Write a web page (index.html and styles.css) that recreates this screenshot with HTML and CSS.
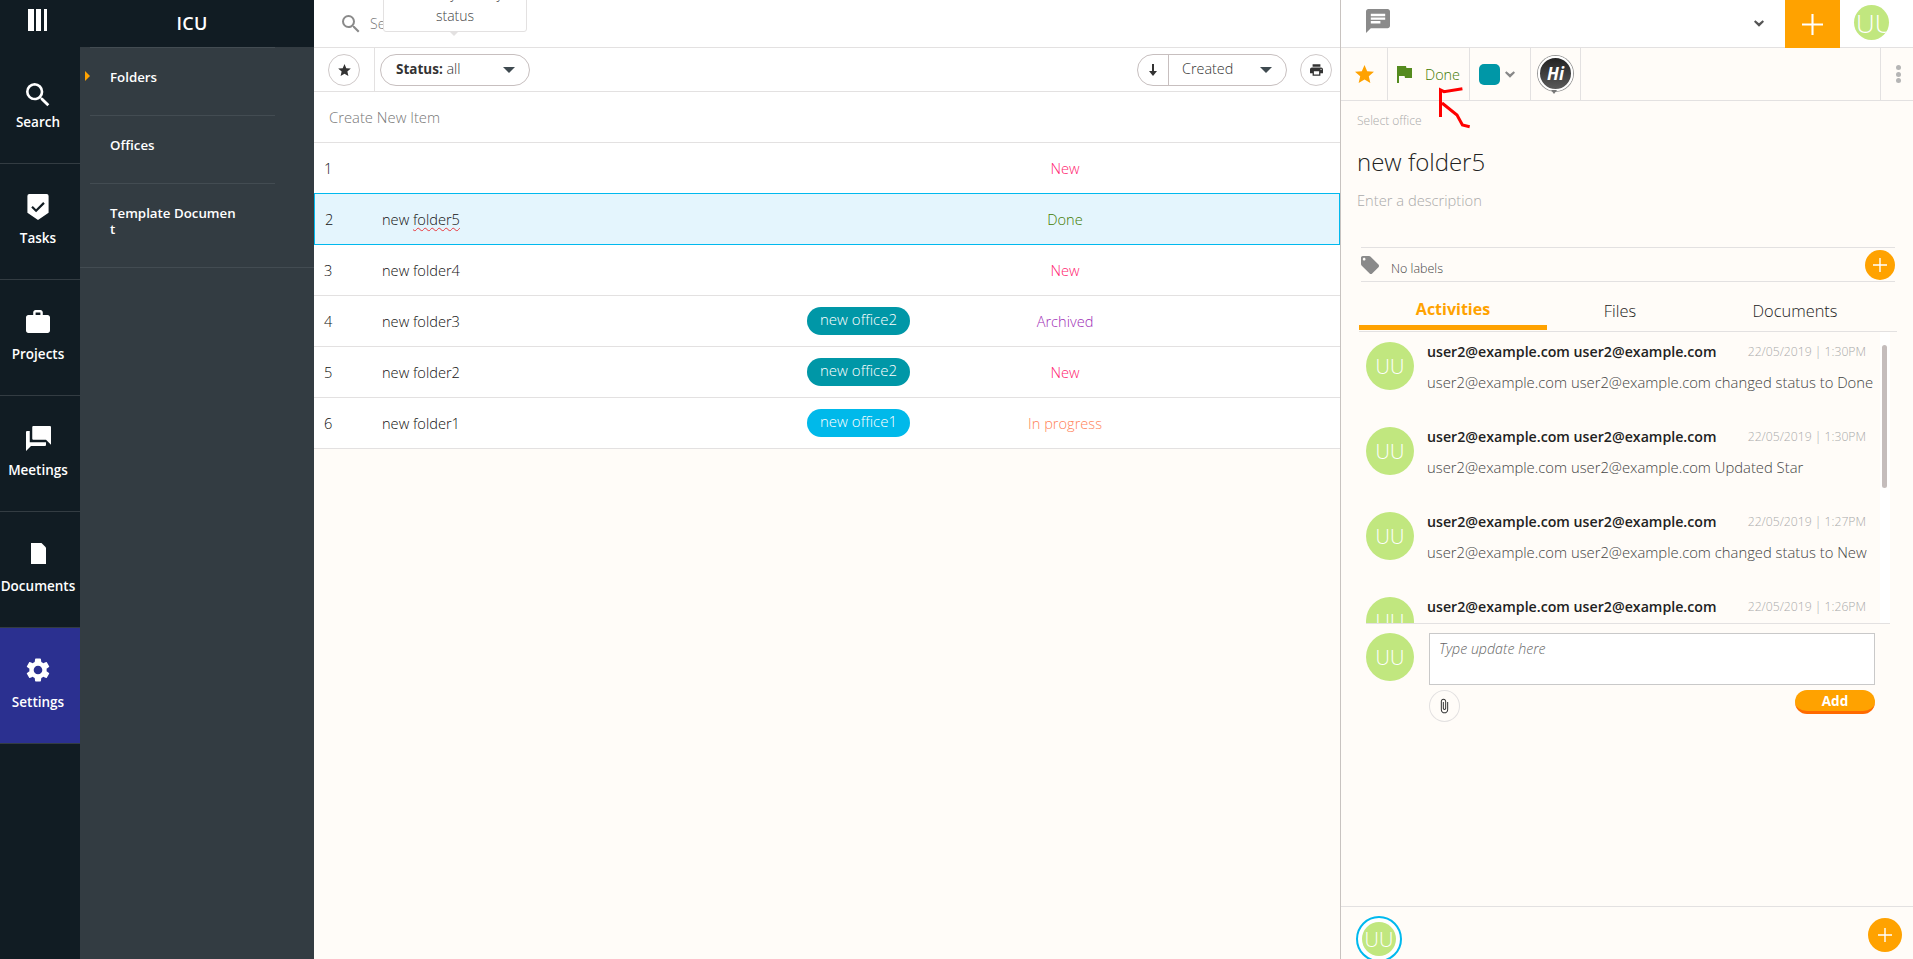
FILE: index.html
```html
<!DOCTYPE html>
<html lang="en">
<head>
<meta charset="utf-8">
<title>ICU</title>
<link rel="stylesheet" href="styles.css">
</head>
<body>
<svg class="defs" width="0" height="0" aria-hidden="true">
  <symbol id="i-search" viewBox="3 3 18 18"><path d="M15.5 14h-.79l-.28-.27A6.471 6.471 0 0 0 16 9.5 6.5 6.5 0 1 0 9.5 16c1.61 0 3.09-.59 4.23-1.57l.27.28v.79l5 4.99L20.49 19l-4.99-5zm-6 0C7.01 14 5 11.99 5 9.5S7.01 5 9.5 5 14 7.01 14 9.5 11.99 14 9.5 14z"/></symbol>
  <symbol id="i-tasks" viewBox="0 0 22 27"><path fill-rule="evenodd" d="M2 0h18a2 2 0 0 1 2 2v17.5L11 27 0 19.500V2a2 2 0 0 1 2-2zm3.600 12.400L4 14l5 5 9-9-1.600-1.600L9 15.800z"/></symbol>
  <symbol id="i-work" viewBox="2 2 20 19"><path d="M20 6h-4V4c0-1.110-.89-2-2-2h-4c-1.110 0-2 .89-2 2v2H4c-1.110 0-1.990.89-1.990 2L2 19c0 1.110.89 2 2 2h16c1.110 0 2-.89 2-2V8c0-1.110-.89-2-2-2zm-6 0h-4V4h4v2z"/></symbol>
  <symbol id="i-forum" viewBox="2 2 20 20"><path transform="matrix(-1 0 0 1 24 0)" d="M21 6h-2v9H6v2c0 .55.45 1 1 1h11l4 4V7c0-.55-.45-1-1-1zm-4 6V3c0-.55-.45-1-1-1H3c-.55 0-1 .45-1 1v14l4-4h10c.55 0 1-.45 1-1z"/></symbol>
  <symbol id="i-doc" viewBox="0 0 15 21"><path d="M0 0h10.500L15 4.500V21H0z"/></symbol>
  <symbol id="i-gear" viewBox="2.500 2 19 20"><path d="M19.140 12.940c.04-.3.06-.61.06-.94 0-.32-.02-.64-.07-.94l2.030-1.580a.49.49 0 0 0 .12-.61l-1.920-3.320a.488.488 0 0 0-.59-.22l-2.390.96c-.5-.38-1.030-.7-1.620-.94l-.36-2.540a.484.484 0 0 0-.48-.41h-3.840c-.24 0-.43.17-.47.41l-.36 2.540c-.59.24-1.130.57-1.620.94l-2.390-.96c-.22-.08-.47 0-.59.22L2.740 8.870c-.12.21-.08.47.12.61l2.030 1.580c-.05.3-.09.63-.09.94s.02.64.07.94l-2.030 1.580a.49.49 0 0 0-.12.61l1.920 3.320c.12.22.37.29.59.22l2.390-.96c.5.38 1.030.7 1.620.94l.36 2.540c.05.24.24.41.48.41h3.840c.24 0 .44-.17.47-.41l.36-2.540c.59-.24 1.130-.56 1.620-.94l2.390.96c.22.08.47 0 .59-.22l1.920-3.320c.12-.22.07-.47-.12-.61l-2.010-1.580zM12 15.600c-1.980 0-3.600-1.620-3.600-3.600s1.620-3.600 3.600-3.600 3.600 1.620 3.600 3.600-1.620 3.600-3.600 3.600z"/></symbol>
  <symbol id="i-star" viewBox="2 2 20 19"><path d="M12 17.270 18.180 21l-1.640-7.030L22 9.240l-7.190-.61L12 2 9.190 8.630 2 9.240l5.460 4.730L5.820 21z"/></symbol>
  <symbol id="i-print" viewBox="2 3 20 18"><path d="M19 8H5c-1.660 0-3 1.340-3 3v6h4v4h12v-4h4v-6c0-1.660-1.340-3-3-3zm-3 11H8v-5h8v5zm3-7c-.55 0-1-.45-1-1s.45-1 1-1 1 .45 1 1-.45 1-1 1zm-1-9H6v4h12V3z"/></symbol>
  <symbol id="i-down" viewBox="0 0 8 12"><path d="M3 0h2v7h3l-4 5-4-5h3z"/></symbol>
  <symbol id="i-chat" viewBox="2 2 20 20" preserveAspectRatio="none"><path d="M20 2H4c-1.100 0-1.990.9-1.990 2L2 22l4-4h14c1.100 0 2-.9 2-2V4c0-1.100-.9-2-2-2zM6 9h12v2H6V9zm8 5H6v-2h8v2zm4-6H6V6h12v2z"/></symbol>
  <symbol id="i-flag" viewBox="5 4 15 17"><path d="M14.400 6L14 4H5v17h2v-7h5.600l.4 2h7V6z"/></symbol>
  <symbol id="i-label" viewBox="2 2 20 20"><path d="M21.410 11.580l-9-9C12.050 2.220 11.550 2 11 2H4c-1.100 0-2 .9-2 2v7c0 .55.22 1.050.59 1.420l9 9c.36.36.86.58 1.410.58.55 0 1.050-.22 1.410-.59l7-7c.37-.36.59-.86.59-1.410 0-.55-.23-1.060-.59-1.420zM5.500 7C4.670 7 4 6.330 4 5.500S4.670 4 5.500 4 7 4.670 7 5.500 6.330 7 5.500 7z"/></symbol>
  <symbol id="i-clip" viewBox="6 0 13 24"><path d="M16.500 6v11.500c0 2.210-1.790 4-4 4s-4-1.790-4-4V5c0-1.380 1.120-2.500 2.500-2.500s2.500 1.120 2.500 2.500v10.500c0 .55-.45 1-1 1s-1-.45-1-1V6H10v9.500c0 1.380 1.120 2.500 2.500 2.500s2.500-1.120 2.500-2.500V5c0-2.210-1.790-4-4-4S7 2.790 7 5v12.500c0 3.040 2.460 5.500 5.500 5.500s5.500-2.460 5.500-5.500V6h-1.500z"/></symbol>
  <symbol id="i-chev" viewBox="0 0 12 8"><path d="M1.600 0 6 3.800 10.400 0 12 2 6 8 0 2z"/></symbol>
  <symbol id="i-plus" viewBox="0 0 20 20"><path d="M9 0h2v9h9v2h-9v9H9v-9H0V9h9z"/></symbol>
</svg>

<div class="app">
  <aside class="sidebar">
    <header class="brand">
      <div class="brand-menu">
        <span class="bar bar-a"></span><span class="bar bar-b"></span><span class="bar bar-c"></span>
      </div>
      <div class="brand-title">ICU</div>
    </header>
    <div class="nav-wrap">
      <nav class="rail">
        <a class="rail-item"><svg class="rail-icon ri-search"><use href="#i-search"/></svg><span>Search</span></a>
        <a class="rail-item"><svg class="rail-icon ri-tasks"><use href="#i-tasks"/></svg><span>Tasks</span></a>
        <a class="rail-item"><svg class="rail-icon ri-work"><use href="#i-work"/></svg><span>Projects</span></a>
        <a class="rail-item"><svg class="rail-icon ri-forum"><use href="#i-forum"/></svg><span>Meetings</span></a>
        <a class="rail-item"><svg class="rail-icon ri-doc"><use href="#i-doc"/></svg><span>Documents</span></a>
        <a class="rail-item rail-active"><svg class="rail-icon ri-gear"><use href="#i-gear"/></svg><span>Settings</span></a>
      </nav>
      <nav class="subnav">
        <a class="sub-item sub-active"><span class="sub-text">Folders</span></a>
        <a class="sub-item sub-mid"><span class="sub-text">Offices</span></a>
        <a class="sub-item sub-last"><span class="sub-text">Template Document</span></a>
      </nav>
    </div>
  </aside>

  <main class="main">
    <div class="searchbar">
      <svg class="search-icon"><use href="#i-search"/></svg>
      <span class="search-text">Search</span>
      <div class="tooltip">Filter by activity status</div>
    </div>
    <div class="filterbar">
      <div class="star-cell"><button class="round-btn"><svg class="ic-star"><use href="#i-star"/></svg></button></div>
      <button class="pill status-pill"><span class="pill-text"><b>Status:</b> all</span><i class="caret"></i></button>
      <div class="spacer"></div>
      <div class="pill sort-pill">
        <span class="sort-dir"><svg class="ic-down"><use href="#i-down"/></svg></span>
        <span class="sort-name pill-text">Created</span><i class="caret"></i>
      </div>
      <button class="round-btn print-btn"><svg class="ic-print"><use href="#i-print"/></svg></button>
    </div>
    <div class="create-row">Create New Item</div>
    <div class="row"><span class="c-num">1</span><span class="c-name"></span><span class="c-office"></span><span class="c-status s-new">New</span></div>
    <div class="row row-selected"><span class="c-num">2</span><span class="c-name">new <span class="spell">folder5</span></span><span class="c-office"></span><span class="c-status s-done">Done</span></div>
    <div class="row"><span class="c-num">3</span><span class="c-name">new folder4</span><span class="c-office"></span><span class="c-status s-new">New</span></div>
    <div class="row"><span class="c-num">4</span><span class="c-name">new folder3</span><span class="c-office"><span class="office o-teal">new office2</span></span><span class="c-status s-arch">Archived</span></div>
    <div class="row"><span class="c-num">5</span><span class="c-name">new folder2</span><span class="c-office"><span class="office o-teal">new office2</span></span><span class="c-status s-new">New</span></div>
    <div class="row"><span class="c-num">6</span><span class="c-name">new folder1</span><span class="c-office"><span class="office o-blue">new office1</span></span><span class="c-status s-prog">In progress</span></div>
  </main>

  <section class="detail">
    <div class="topbar">
      <svg class="ic-chat"><use href="#i-chat"/></svg>
      <div class="spacer"></div>
      <svg class="ic-chev-top"><use href="#i-chev"/></svg>
      <button class="add-top"><svg class="ic-plus-top"><use href="#i-plus"/></svg></button>
      <div class="avatar avatar-top"><span>UU</span></div>
    </div>
    <div class="toolbar">
      <div class="tool tool-star"><svg class="ic-star-o"><use href="#i-star"/></svg></div>
      <div class="tool tool-status"><svg class="ic-flag"><use href="#i-flag"/></svg><span>Done</span></div>
      <div class="tool tool-color"><span class="swatch"></span><svg class="ic-chev"><use href="#i-chev"/></svg></div>
      <div class="tool tool-hi"><div class="hi"><span>Hi</span></div></div>
      <div class="spacer"></div>
      <div class="tool tool-more"><i></i><i></i><i></i></div>
    </div>
    <div class="detail-head">
      <div class="select-office">Select office</div>
      <h1 class="title">new folder5</h1>
      <div class="desc">Enter a description</div>
      <div class="labels">
        <svg class="ic-label"><use href="#i-label"/></svg>
        <span class="labels-text">No labels</span>
        <button class="plus-btn"><svg class="ic-plus"><use href="#i-plus"/></svg></button>
      </div>
    </div>
    <div class="tabs">
      <div class="tab tab-active">Activities</div>
      <div class="tab tab-files">Files</div>
      <div class="tab tab-docs">Documents</div>
    </div>
    <div class="activity-wrap">
      <div class="activity-list">
        <div class="activity">
          <div class="avatar avatar-m"><span>UU</span></div>
          <div class="activity-body">
            <div class="activity-top"><b>user2@example.com user2@example.com</b><time>22/05/2019 | 1:30PM</time></div>
            <p>user2@example.com user2@example.com changed status to Done</p>
          </div>
        </div>
        <div class="activity">
          <div class="avatar avatar-m"><span>UU</span></div>
          <div class="activity-body">
            <div class="activity-top"><b>user2@example.com user2@example.com</b><time>22/05/2019 | 1:30PM</time></div>
            <p>user2@example.com user2@example.com Updated Star</p>
          </div>
        </div>
        <div class="activity">
          <div class="avatar avatar-m"><span>UU</span></div>
          <div class="activity-body">
            <div class="activity-top"><b>user2@example.com user2@example.com</b><time>22/05/2019 | 1:27PM</time></div>
            <p>user2@example.com user2@example.com changed status to New</p>
          </div>
        </div>
        <div class="activity">
          <div class="avatar avatar-m"><span>UU</span></div>
          <div class="activity-body">
            <div class="activity-top"><b>user2@example.com user2@example.com</b><time>22/05/2019 | 1:26PM</time></div>
          </div>
        </div>
      </div>
      <div class="scroll-track"><div class="scroll-thumb"></div></div>
    </div>
    <div class="composer">
      <div class="avatar avatar-m"><span>UU</span></div>
      <div class="composer-main">
        <div class="update-box">Type update here</div>
        <div class="composer-actions">
          <button class="clip-btn"><svg class="ic-clip"><use href="#i-clip"/></svg></button>
          <button class="add-btn">Add</button>
        </div>
      </div>
    </div>
    <div class="spacer"></div>
    <footer class="detail-foot">
      <div class="ring"><div class="avatar avatar-s"><span>UU</span></div></div>
      <button class="foot-plus"><svg class="ic-plus-foot"><use href="#i-plus"/></svg></button>
    </footer>
  </section>
</div>

<svg class="scribble" viewBox="0 0 33 43" width="33" height="43" aria-hidden="true">
  <path d="M24.400 2.700 6 5.700 2.500 4V31M4 17l15 12 5.400 10 7.300 1.700"/>
</svg>
</body>
</html>
```
FILE: styles.css
```css
* { box-sizing: border-box; }
html, body { margin: 0; height: 100%; overflow: hidden; }
body { font-family: "Open Sans", "Liberation Sans", sans-serif; color: #222; background: #fffcf8; font-size: 14px; }
button { font: inherit; padding: 0; cursor: pointer; }
svg { display: block; fill: currentColor; }
.defs { position: absolute; }
.spacer { flex: 1 1 auto; }
.app { display: flex; height: 959px; }

/* sidebar */
.sidebar { width: 314px; flex: none; display: flex; flex-direction: column; background: #333c42; color: #fff; }
.brand { height: 47px; flex: none; display: flex; background: #111c23; }
.brand-menu { width: 80px; display: flex; gap: 2px; padding: 9px 0 0 28px; }
.bar { display: block; height: 22px; background: #fff; }
.bar-a { width: 6px; }
.bar-b { width: 5px; }
.bar-c { width: 3px; margin-left: 1px; }
.brand-title { flex: 1; text-align: center; font-size: 18px; font-weight: 600; line-height: 46px; padding-right: 10px; letter-spacing: .3px; }
.nav-wrap { flex: 1; display: flex; }
.rail { width: 80px; flex: none; background: #111c23; padding-top: 1px; }
.rail-item { display: flex; flex-direction: column; align-items: center; height: 116px; padding-right: 4px; border-bottom: 1px solid #333c42; font-size: 13.500px; font-weight: 600; line-height: 18px; color: #fff; white-space: nowrap; }
.rail-active { background: #2b3090; }
.rail-icon { flex: none; color: #fff; }
.ri-search { width: 24px; height: 24px; margin: 35px 0 6px; }
.ri-tasks { width: 22px; height: 26px; margin: 30px 0 9px; }
.ri-work { width: 24px; height: 23px; margin: 30px 0 12px; }
.ri-forum { width: 25px; height: 25px; margin: 30px 0 10px; }
.ri-doc { width: 15px; height: 21px; margin: 31px 0 13px; }
.ri-gear { width: 24px; height: 24px; margin: 30px 0 11px; }

.subnav { flex: 1; }
.sub-item { display: block; position: relative; height: 68px; margin: 0 39px 0 10px; padding: 21px 0 0 20px; border-top: 1px solid #434c52; font-size: 13.300px; font-weight: 600; line-height: 16px; color: #fff; }
.sub-text { display: block; word-break: break-all; }
.sub-mid { height: 69px; border-bottom: 1px solid #434c52; }
.sub-last { height: 84px; margin: 0; padding: 21px 76px 0 30px; border-top: 0; border-bottom: 1px solid #434c52; }
.sub-active::before { content: ""; position: absolute; left: -5px; top: 23px; border-left: 5px solid #ffa200; border-top: 5px solid transparent; border-bottom: 5px solid transparent; }

/* main list */
.main { width: 1026px; flex: none; background: #fffcf8; }
.searchbar { height: 48px; position: relative; display: flex; align-items: center; padding: 0 0 0 28px; background: #fff; border-bottom: 1px solid #e3e1e1; }
.search-icon { width: 18px; height: 18px; color: #8a8a8a; }
.search-text { margin-left: 10px; color: #777; font-size: 14px; font-weight: 300; }
.tooltip { position: absolute; left: 69px; top: -21px; width: 144px; height: 53px; padding: 3px 14px; background: #fff; border: 1px solid #e3e1e1; border-radius: 3px; text-align: center; font-size: 14px; font-weight: 300; line-height: 22px; color: #444; }
.tooltip::after { content: ""; position: absolute; left: 65px; bottom: -5px; border-top: 5px solid #e3e1e1; border-left: 5px solid transparent; border-right: 5px solid transparent; }
.filterbar { height: 44px; display: flex; align-items: center; padding-right: 8px; background: #fff; border-bottom: 1px solid #e3e1e1; }
.star-cell { width: 61px; height: 43px; padding-left: 14px; display: flex; align-items: center; border-right: 1px solid #e3e1e1; margin-right: 5px; }
.round-btn { width: 32px; height: 32px; flex: none; display: flex; align-items: center; justify-content: center; background: #fff; border: 1px solid #cfc9c9; border-radius: 50%; color: #333; }
.ic-star { width: 13px; height: 12px; }
.ic-print { width: 13px; height: 12px; }
.ic-down { width: 8px; height: 12px; }
.pill { height: 32px; width: 150px; background: #fff; border: 1px solid #c7bfbf; border-radius: 16px; color: #333; font-size: 14.400px; font-weight: 300; display: flex; align-items: center; }
.pill-text { padding-bottom: 2px; }
.status-pill { justify-content: space-between; padding: 0 14px 0 15px; }
.status-pill b { font-weight: 700; font-size: 13.500px; }
.caret { display: block; border-top: 6px solid #3f4a50; border-left: 6px solid transparent; border-right: 6px solid transparent; }
.sort-dir { width: 31px; height: 30px; flex: none; display: flex; align-items: center; justify-content: center; border-right: 1px solid #c7bfbf; }
.sort-name { flex: 1; padding-left: 13px; }
.sort-pill .caret { margin-right: 14px; }
.print-btn { margin-left: 13px; }
.create-row { height: 51px; padding-left: 15px; line-height: 50px; background: #fff; border-bottom: 1px solid #e3e1e1; color: #777; font-size: 14.800px; font-weight: 300; }
.row { height: 51px; display: flex; align-items: center; padding-bottom: 1px; background: #fff; border-bottom: 1px solid #e3e1e1; color: #111; font-size: 14.600px; font-weight: 300; }
.row-selected { background: #e4f5fd; border: 1px solid #00b9ee; height: 52px; margin-top: -1px; }
.row-selected .c-num { width: 67px; }
.c-num { width: 68px; padding-left: 10px; }
.c-name { width: 425px; }
.c-office { width: 209px; }
.c-status { width: 98px; text-align: center; white-space: nowrap; }
.spell { text-decoration: underline wavy #e8383d 1px; text-underline-offset: 2px; }
.office { display: block; width: 103px; height: 28px; margin-top: 1px; border-radius: 14px; color: #fff; text-align: center; font-size: 15px; font-weight: 300; line-height: 24px; }
.o-teal { background: #0097a7; }
.o-blue { background: #00b9ea; }
.s-new { color: #ff1a6e; }
.s-done { color: #3f7a00; }
.s-arch { color: #a02db5; }
.s-prog { color: #ff7f57; }

/* detail */
.detail { flex: 1; min-width: 0; display: flex; flex-direction: column; border-left: 1px solid #c8c3c0; background: #fffcf8; }
.topbar { height: 48px; flex: none; display: flex; background: #fff; border-bottom: 1px solid #e3e1e1; }
.ic-chat { width: 24px; height: 24px; margin: 9px 0 0 25px; color: #8a8a8a; }
.ic-chev-top { width: 10px; height: 7px; margin: 20px 21px 0 0; color: #555; }
.add-top { width: 55px; height: 48px; border: 0; background: #ffa200; color: #fff; display: flex; align-items: center; justify-content: center; }
.ic-plus-top { width: 21px; height: 21px; }
.avatar { border-radius: 50%; background: #c1e77f; color: #fff; display: flex; align-items: center; justify-content: center; overflow: hidden; font-weight: 300; flex: none; }
.avatar-top { width: 35px; height: 35px; margin: 5px 24px 0 14px; padding-left: 2px; justify-content: flex-start; font-size: 26px; }
.toolbar { height: 53px; flex: none; display: flex; border-bottom: 1px solid #e3e1e1; }
.tool { height: 52px; flex: none; display: flex; align-items: center; border-right: 1px solid #e3e1e1; }
.tool-star { width: 47px; padding-left: 14px; }
.ic-star-o { width: 19px; height: 18px; color: #ffa200; }
.tool-status { width: 82px; padding-left: 9px; color: #3f7a00; font-size: 14.400px; font-weight: 300; }
.ic-flag { width: 15px; height: 17px; margin-right: 13px; color: #558b1f; }
.tool-color { width: 61px; padding-left: 9px; }
.swatch { width: 21px; height: 21px; border-radius: 5px; background: #0097a7; }
.ic-chev { width: 10px; height: 7px; margin-left: 5px; color: #888; }
.tool-hi { width: 50px; padding: 0 0 2px 7px; }
.hi { position: relative; width: 35px; height: 35px; border-radius: 50%; background: linear-gradient(#222, #5a5a5a); border: 2px solid #fff; box-shadow: 0 0 0 1px #999; color: #fff; display: flex; align-items: center; justify-content: center; font-size: 17px; font-style: italic; font-weight: 700; }
.hi::after { content: ""; position: absolute; left: 11px; bottom: -5px; border-top: 4px solid #777; border-left: 3px solid transparent; border-right: 3px solid transparent; }
.tool-more { width: 33px; border-right: 0; border-left: 1px solid #e3e1e1; flex-direction: column; justify-content: center; align-items: flex-start; gap: 1.500px; padding-left: 15px; }
.tool-more i { display: block; width: 5px; height: 5px; border-radius: 50%; background: #b5b5b5; }

.detail-head { flex: none; padding: 12px 0 0 16px; }
.select-office { font-size: 12px; font-weight: 300; line-height: 16px; color: #aaa; }
.title { margin: 18px 0 0; font-size: 24px; font-weight: 300; line-height: 29px; color: #222; }
.desc { margin-top: 14px; font-size: 14.700px; font-weight: 300; line-height: 20px; color: #aaa; }
.labels { margin: 37px 18px 0 4px; height: 35px; display: flex; align-items: center; border-top: 1px solid #e3e1e1; border-bottom: 1px solid #e3e1e1; position: relative; }
.ic-label { width: 18px; height: 18px; color: #8a8a8a; }
.labels-text { margin: 8px 0 0 12px; font-size: 12.500px; font-weight: 300; color: #444; }
.plus-btn { position: absolute; right: 0; top: 2px; width: 30px; height: 30px; border: 0; border-radius: 50%; background: #ffa200; color: #fff; display: flex; align-items: center; justify-content: center; }
.ic-plus { width: 14px; height: 14px; }
.tabs { flex: none; height: 50px; margin: 0 16px 0 18px; display: flex; border-bottom: 1px solid #e3e1e1; }
.tab { flex: none; text-align: center; font-size: 16.400px; font-weight: 300; line-height: 24px; padding-top: 17px; color: #222; }
.tab-active { width: 188px; height: 48px; padding-top: 15px; border-bottom: 5px solid #ffa200; color: #ffa200; font-size: 16px; font-weight: 700; }
.tab-files { width: 146px; }
.tab-docs { flex: 1; }
.activity-wrap { flex: none; height: 292px; margin-left: 25px; width: 524px; display: flex; overflow: hidden; border-bottom: 1px solid #e3e1e1; }
.activity-list { flex: 1; min-width: 0; padding-top: 10px; overflow: hidden; }
.activity { height: 85px; display: flex; gap: 13px; }
.avatar-m { width: 48px; height: 48px; font-size: 20px; }
.activity-body { flex: 1; min-width: 0; }
.activity-top { display: flex; justify-content: space-between; align-items: center; padding-right: 14px; line-height: 20px; }
.activity-top b { font-size: 14.200px; font-weight: 600; color: #222; }
.activity-top time { font-size: 12.200px; font-weight: 300; color: #aaa; }
.activity-body p { margin: 10px 0 0; font-size: 14.800px; font-weight: 300; color: #444; line-height: 20px; white-space: nowrap; }
.scroll-track { width: 10px; flex: none; background: #fff; padding: 13px 3px 0 2px; }
.scroll-thumb { width: 5px; height: 143px; border-radius: 3px; background: #c4bdbd; }
.composer { flex: none; display: flex; gap: 15px; margin: 9px 0 0 25px; width: 509px; }
.composer-main { flex: 1; }
.update-box { height: 52px; padding: 5px 9px; background: #fff; border: 1px solid #c9c9c9; font-size: 14.200px; font-style: italic; font-weight: 300; color: #666; }
.composer-actions { display: flex; justify-content: space-between; align-items: flex-start; margin-top: 5px; }
.clip-btn { width: 31px; height: 32px; border: 1px solid #e3e1e1; border-radius: 50%; background: #fffcf8; color: #333; display: flex; align-items: center; justify-content: center; }
.ic-clip { width: 9px; height: 16px; }
.add-btn { width: 80px; height: 24px; border: 0; border-bottom: 3px solid #ff6a00; border-radius: 12px; background: #ffa200; color: #fff; font-size: 13.500px; font-weight: 700; line-height: 20px; }
.detail-foot { flex: none; height: 53px; border-top: 1px solid #e3e1e1; display: flex; justify-content: space-between; padding: 9px 0 0 15px; overflow: hidden; }
.ring { width: 46px; height: 46px; flex: none; border-radius: 50%; border: 2px solid #00b9ee; background: #fff; padding: 4px; }
.avatar-s { width: 34px; height: 34px; font-size: 20px; }
.foot-plus { width: 34px; height: 34px; margin: 2px 11px 0 0; border: 0; border-radius: 50%; background: #ffa200; color: #fff; display: flex; align-items: center; justify-content: center; }
.ic-plus-foot { width: 14px; height: 14px; }

.scribble { position: absolute; left: 1438px; top: 86px; fill: none; stroke: #f00; stroke-width: 3; }
```
